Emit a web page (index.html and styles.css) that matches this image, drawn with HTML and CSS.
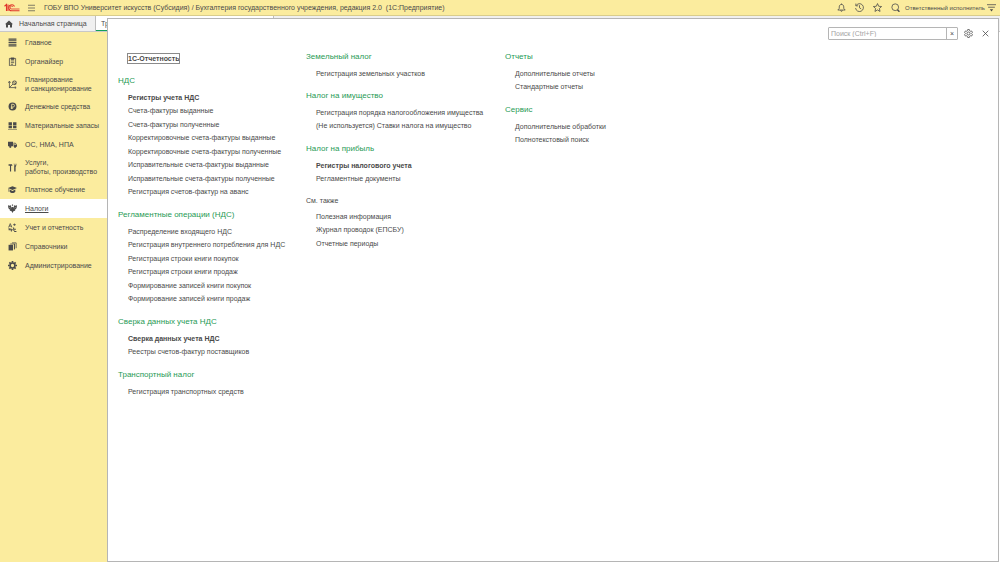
FILE: index.html
```html
<!DOCTYPE html>
<html lang="ru">
<head>
<meta charset="utf-8">
<title>Бухгалтерия государственного учреждения</title>
<link rel="stylesheet" href="styles.css">
</head>
<body>
<header class="topbar">
  <svg class="logo" viewBox="0 0 32 18" aria-label="1С"><g fill="none" stroke="#e0342b" stroke-width="2.200"><path d="M1 6.500 5 3V16M8 3v13"/><path d="M21 7A6 6 0 1 0 16 15.500H31"/><path d="M18 8A3 3 0 1 0 16 12H31" stroke-width="1.600"/></g></svg>
  <button class="icon-btn menu-btn" aria-label="Меню"><svg viewBox="0 0 16 16"><path d="M1 2.500h14M1 8h14M1 13.500h14"/></svg></button>
  <h1 class="app-title">ГОБУ ВПО Университет искусств (Субсидия) / Бухгалтерия государственного учреждения, редакция 2.0&nbsp; (1С:Предприятие)</h1>
  <div class="tools">
    <button class="icon-btn" aria-label="Уведомления"><svg viewBox="0 0 16 16"><path d="M1.500 12.500h13L12 9.500V7c0-2.500-1.500-4.500-4-4.500S4 4.500 4 7v2.500zM6.500 13c0 2.500 3 2.500 3 0M8 1v2"/></svg></button>
    <button class="icon-btn" aria-label="История"><svg viewBox="0 0 16 16"><path d="M2 4.500A7 7 0 1 1 1 9M1.500 1v4h4M8 4v4.500l3 2"/></svg></button>
    <button class="icon-btn" aria-label="Избранное"><svg viewBox="0 0 16 16"><path d="m8 1 2.100 4.800 5.200.5-3.900 3.500 1.100 5.200L8 12.300 3.500 15l1.100-5.200L.7 6.300l5.200-.5z"/></svg></button>
    <button class="icon-btn" aria-label="Поиск"><svg viewBox="0 0 16 16"><circle cx="7.500" cy="7.500" r="6"/><path stroke-width="2.500" d="m11.500 12 3.500 3.500"/></svg></button>
    <a class="user" href="#">Ответственный исполнитель</a>
    <button class="icon-btn" aria-label="Настройки окна"><svg viewBox="0 0 16 16"><path d="M0 3h16M2 7.500h12"/><path class="solid" d="M5 11h6l-3 4z"/></svg></button>
  </div>
</header>
<nav class="tabs">
  <a class="tab home" href="#"><svg class="tab-icon" viewBox="0 0 16 16"><path class="solid" d="M8 1 0 8.500h2V15h4v-5h4v5h4V8.500h2z"/></svg>Начальная страница</a>
  <a class="tab current" href="#">Транспортный налог</a>
</nav>
<div class="workspace">
  <nav class="sections">
    <a class="section" href="#"><svg viewBox="0 0 16 16"><path stroke-width="1.800" d="M1 2h14M1 5h14M1 8h14M1 11h14M1 14h14"/></svg><span>Главное</span></a>
    <a class="section" href="#"><svg viewBox="0 0 16 16"><path d="M2.500 2.500h11v13h-11zM5 7h6M5 10h6M5 13h4"/><path class="solid" d="M5 1h6v4H5z"/></svg><span>Органайзер</span></a>
    <a class="section double" href="#"><svg viewBox="0 0 16 16"><path d="M2.500 14V3M.5 5l2-3 2 3M2 13.500h12M12 11.500l2.500 2-2.500 2M3 13l6-6"/><circle class="solid" cx="11.500" cy="5" r="4"/><path stroke="#fbec9e" d="M10.500 7.500V3H12a1 1 0 0 1 0 2.500H9.500"/></svg><span>Планирование<br>и санкционирование</span></a>
    <a class="section" href="#"><svg viewBox="0 0 16 16"><circle class="solid" cx="8" cy="8" r="7"/><path stroke="#fbec9e" d="M6.500 12.500V4H9a2 2 0 0 1 0 5H5M5 11h4"/></svg><span>Денежные средства</span></a>
    <a class="section" href="#"><svg viewBox="0 0 16 16"><path class="solid" d="M1 2h6v5H1zM9 2h6v5H9zM1 8h6v5H1zM9 8h6v5H9zM0 14h16v1H0z"/></svg><span>Материальные запасы</span></a>
    <a class="section" href="#"><svg viewBox="0 0 16 16"><path class="solid" d="M0 3h9v8H0zM10 5h3l3 3v4h-6z"/><circle class="solid" cx="4" cy="12" r="2"/><circle class="solid" cx="12.500" cy="12" r="2"/><path stroke="#fbec9e" stroke-width="1" d="M11.500 8V6.500h1.500L14.500 8z"/></svg><span>ОС, НМА, НПА</span></a>
    <a class="section double" href="#"><svg viewBox="0 0 16 16"><path class="solid" d="M1 2h6l1 3H5.500v10h-2V5H1zM11 7V3.500L10 1.500h1.500V4h2V1.500H15l-.5 4L13.500 7v8H11z"/></svg><span>Услуги,<br>работы, производство</span></a>
    <a class="section" href="#"><svg viewBox="0 0 16 16"><path class="solid" d="m8 2 8 3.500L8 9 0 5.500zM3 8l5 2.500L13 8v4c-2 3-8 3-10 0zM1 6h1v6H1z"/></svg><span>Платное обучение</span></a>
    <a class="section active" href="#"><svg viewBox="0 0 16 16"><path class="solid" d="M8 5 6.500 6 5 5l1-1.500L4.500 2 3 3 0 2c0 4 1 7 4 8l-1 2 3 .5L8 16l2-3.500 3-.5-1-2c3-1 4-4 4-8l-3 1-1.500-1L10 3.500 11 5 9.500 6zM7 1h2v2H7z"/><path stroke="#fff" stroke-width=".7" d="m2 5 3 3M14 5l-3 3"/></svg><span>Налоги</span></a>
    <a class="section" href="#"><svg viewBox="0 0 16 16"><path d="M1 8 4 1l3 7M2 5.500h4M9 3h5M11.500 1v4M4 10l8 4"/><path stroke-width="1.800" d="M2 9v3h4v3M10 8v3h4M11 15h4"/></svg><span>Учет и отчетность</span></a>
    <a class="section" href="#"><svg viewBox="0 0 16 16"><path class="solid" d="M1 5h8v10H1z"/><path d="M4 3.500h7.500V13M7 1.500h7.500V11"/><path class="solid" d="M11 3h1.500v10H11z"/></svg><span>Справочники</span></a>
    <a class="section" href="#"><svg viewBox="0 0 16 16"><circle cx="8" cy="8" r="4.300" stroke-width="2.800"/><path stroke-width="3" d="M8 0v3M8 13v3M0 8h3M13 8h3M2.400 2.400l2 2M11.600 11.600l2 2M2.400 13.600l2-2M11.600 4.400l2-2"/></svg><span>Администрирование</span></a>
  </nav>
  <main class="panel">
    <form class="panel-bar">
      <div class="search"><input type="text" aria-label="Поиск" placeholder="Поиск (Ctrl+F)"><button class="clear" type="button" aria-label="Очистить">×</button></div>
      <button class="icon-btn gear" type="button" aria-label="Настройка"><svg viewBox="0 0 16 16"><path d="M6.500 1h3l.5 2 1.500 1 2-.5L15 6l-1.500 1.500v1L15 10l-1.500 2.500-2-.5-1.500 1-.5 2h-3L6 13l-1.500-1-2 .5L1 10l1.500-1.500v-1L1 6l1.500-2.500 2 .5L6 3z"/><circle cx="8" cy="8" r="2.700"/></svg></button>
      <button class="icon-btn close" type="button" aria-label="Закрыть"><svg viewBox="0 0 16 16"><path d="m3 3 10 10M13 3 3 13"/></svg></button>
    </form>
    <div class="columns">
      <div class="column">
        <ul class="links lead"><li><a class="strong focused" href="#">1С-Отчетность</a></li></ul>
        <section><h2>НДС</h2><ul class="links">
          <li><a class="strong" href="#">Регистры учета НДС</a></li>
          <li><a href="#">Счета-фактуры выданные</a></li>
          <li><a href="#">Счета-фактуры полученные</a></li>
          <li><a href="#">Корректировочные счета-фактуры выданные</a></li>
          <li><a href="#">Корректировочные счета-фактуры полученные</a></li>
          <li><a href="#">Исправительные счета-фактуры выданные</a></li>
          <li><a href="#">Исправительные счета-фактуры полученные</a></li>
          <li><a href="#">Регистрация счетов-фактур на аванс</a></li>
        </ul></section>
        <section><h2>Регламентные операции (НДС)</h2><ul class="links">
          <li><a href="#">Распределение входящего НДС</a></li>
          <li><a href="#">Регистрация внутреннего потребления для НДС</a></li>
          <li><a href="#">Регистрация строки книги покупок</a></li>
          <li><a href="#">Регистрация строки книги продаж</a></li>
          <li><a href="#">Формирование записей книги покупок</a></li>
          <li><a href="#">Формирование записей книги продаж</a></li>
        </ul></section>
        <section><h2>Сверка данных учета НДС</h2><ul class="links">
          <li><a class="strong" href="#">Сверка данных учета НДС</a></li>
          <li><a href="#">Реестры счетов-фактур поставщиков</a></li>
        </ul></section>
        <section><h2>Транспортный налог</h2><ul class="links">
          <li><a href="#">Регистрация транспортных средств</a></li>
        </ul></section>
      </div>
      <div class="column">
        <section><h2>Земельный налог</h2><ul class="links">
          <li><a href="#">Регистрация земельных участков</a></li>
        </ul></section>
        <section><h2>Налог на имущество</h2><ul class="links">
          <li><a href="#">Регистрация порядка налогообложения имущества</a></li>
          <li><a href="#">(Не используется) Ставки налога на имущество</a></li>
        </ul></section>
        <section><h2>Налог на прибыль</h2><ul class="links">
          <li><a class="strong" href="#">Регистры налогового учета</a></li>
          <li><a href="#">Регламентные документы</a></li>
        </ul></section>
        <section><h2 class="also">См. также</h2><ul class="links">
          <li><a href="#">Полезная информация</a></li>
          <li><a href="#">Журнал проводок (ЕПСБУ)</a></li>
          <li><a href="#">Отчетные периоды</a></li>
        </ul></section>
      </div>
      <div class="column">
        <section><h2>Отчеты</h2><ul class="links">
          <li><a href="#">Дополнительные отчеты</a></li>
          <li><a href="#">Стандартные отчеты</a></li>
        </ul></section>
        <section><h2>Сервис</h2><ul class="links">
          <li><a href="#">Дополнительные обработки</a></li>
          <li><a href="#">Полнотекстовый поиск</a></li>
        </ul></section>
      </div>
    </div>
  </main>
</div>
</body>
</html>
```
FILE: styles.css
```css
* { box-sizing: border-box; }
body {
  margin: 0;
  min-height: 100vh;
  display: flex;
  flex-direction: column;
  position: relative;
  background: #fff;
  color: #4a4a4a;
  font-family: "Liberation Sans", Arial, sans-serif;
  font-size: 7px;
}
a { color: inherit; text-decoration: none; }
h1, h2, ul { margin: 0; padding: 0; font-weight: normal; }
ul { list-style: none; }
svg { display: block; fill: none; stroke: #4a4a4a; stroke-width: 1.4; }
.solid { fill: #4a4a4a; stroke: none; }
button { margin: 0; padding: 0; border: 0; background: none; font: inherit; color: inherit; }

.topbar {
  display: flex;
  align-items: center;
  height: 16px;
  padding: 0 4px;
  background: #fbec9e;
  border-bottom: 1px solid #d9cd8c;
}
.logo { width: 16px; height: 9px; }
.icon-btn svg { width: 9px; height: 9px; }
.menu-btn { margin-left: 7px; }
.menu-btn svg { height: 8px; }
.app-title { margin-left: 8px; font-size: 7px; line-height: 15px; white-space: nowrap; }
.tools { display: flex; align-items: center; gap: 9px; margin-left: auto; }
.user { margin-left: -4px; margin-right: -7px; font-size: 6px; white-space: nowrap; }

.tabs {
  display: flex;
  height: 16px;
  background: #f0f0f0;
  border-bottom: 1px solid #c8c8c8;
}
.tab { display: flex; align-items: center; white-space: nowrap; }
.home { width: 96px; padding-left: 5px; gap: 6px; border-right: 1px solid #bdbdbd; }
.tab-icon { width: 8px; height: 8px; }
.current {
  width: 178px;
  padding-left: 5px;
  background: #fff;
  border-right: 1px solid #bdbdbd;
  box-shadow: inset 0 -1px #12a05a;
}

.workspace { flex: 1; display: flex; }
.sections { width: 107px; padding-top: 1px; background: #fbec9e; }
.section {
  display: flex;
  align-items: center;
  gap: 8px;
  height: 19px;
  padding-left: 8px;
  line-height: 9px;
  white-space: nowrap;
}
.double { height: 26px; }
.section svg { width: 9px; height: 9px; }
.active { background: #fff; }
.active span { text-decoration: underline; }

.panel {
  position: absolute;
  top: 18px;
  right: 1px;
  bottom: 0;
  left: 107px;
  background: #fff;
  border: 1px solid #b5b5b5;
}
.panel-bar { display: flex; align-items: center; justify-content: flex-end; padding: 8px 8px 0 0; }
.search { display: flex; width: 130px; height: 13px; border: 1px solid #b5b5b5; border-radius: 1px; }
.search input {
  flex: 1;
  min-width: 0;
  padding: 0 2px;
  border: 0;
  outline: 0;
  font: inherit;
  color: inherit;
}
.search input::placeholder { color: #a3a3a3; }
.clear { width: 11px; border-left: 1px solid #b5b5b5; line-height: 11px; }
.gear { margin-left: 6px; }
.close { margin-left: 8px; }

.columns { display: flex; padding: 9px 10px 0; }
.column { flex: none; width: 188px; }
.column + .column { width: 199px; }
h2 { font-size: 8px; line-height: 16px; color: #1f9a55; white-space: nowrap; }
section { padding-bottom: 8px; }
.links { padding: 2px 0 0 10px; }
.links li { height: 13px; line-height: 13px; white-space: nowrap; }
.links li:nth-child(even) { height: 14px; line-height: 14px; }
.lead { padding-top: 3px; padding-bottom: 8px; }
.strong { font-weight: bold; }
.focused { padding: 1px 0; outline: 1px solid #8a8a8a; }
.also { font-size: 7px; line-height: 14px; color: inherit; }
```
